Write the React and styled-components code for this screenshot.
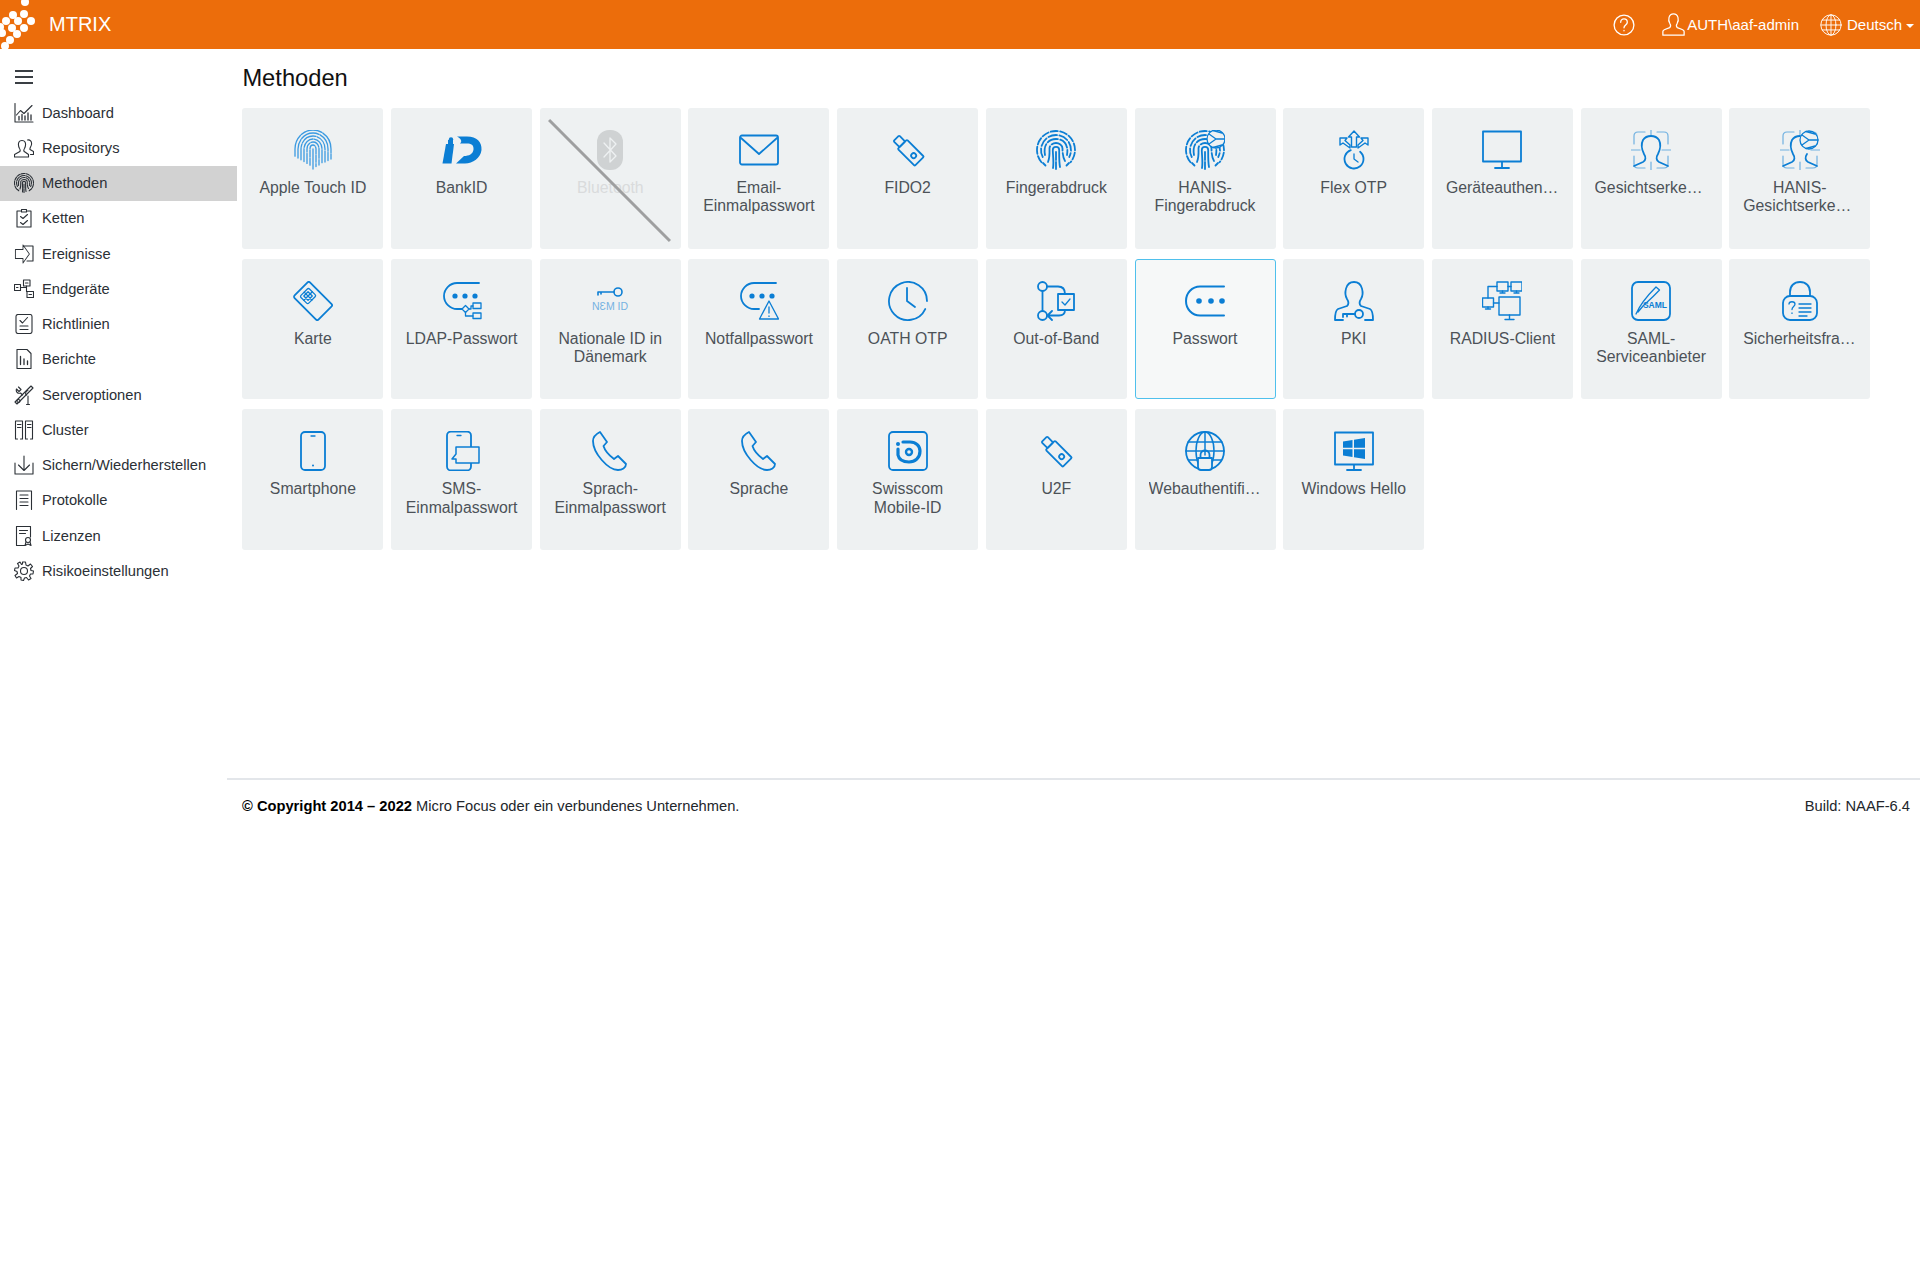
import React from 'react';
import styled, { createGlobalStyle } from 'styled-components';

const GlobalStyle = createGlobalStyle`
  html, body {
    margin: 0;
    padding: 0;
    background: #fff;
    font-family: "Liberation Sans", Arial, sans-serif;
  }
  * { box-sizing: border-box; }
`;

const Header = styled.header`
  display: flex;
  align-items: center;
  height: 49px;
  background: #ec6d0b;
  color: #fff;
  overflow: hidden;
`;

const Brand = styled.div`
  font-size: 20px;
  margin-left: 13px;
  flex: 1;
`;

const HeaderItem = styled.div`
  display: flex;
  align-items: center;
  gap: 1px;
  font-size: 15px;
  margin-left: ${props => props.$gap}px;
`;

const Caret = styled.span`
  width: 0;
  height: 0;
  margin: 2px 0 0 3px;
  border-left: 4px solid transparent;
  border-right: 4px solid transparent;
  border-top: 4px solid #fff;
`;

const Layout = styled.div`
  display: flex;
  align-items: flex-start;
`;

const Sidebar = styled.nav`
  flex: 0 0 227px;
  width: 227px;
`;

const Burger = styled.button`
  display: flex;
  flex-direction: column;
  justify-content: space-between;
  width: 18px;
  height: 14px;
  margin: 21px 0 11px 15px;
  padding: 0;
  border: 0;
  background: none;

  span {
    display: block;
    height: 2px;
    background: #3a3f44;
  }
`;

const MenuItem = styled.a`
  display: flex;
  align-items: center;
  gap: 8px;
  height: 35.25px;
  width: 237px;
  padding-left: 14px;
  font-size: 14.7px;
  color: #2b3036;
  background: ${props => (props.$active ? '#d2d2d2' : 'transparent')};
`;

const Main = styled.main`
  flex: 1;
  min-width: 0;
`;

const Content = styled.div`
  padding: 0 0 0 15.4px;
  height: 729px;
`;

const Title = styled.h1`
  margin: 0;
  padding-top: 14px;
  height: 59px;
  font-size: 23.7px;
  line-height: 30px;
  font-weight: 400;
  color: #111;
`;

const Grid = styled.div`
  display: grid;
  grid-template-columns: repeat(11, 141px);
  grid-auto-rows: 140.7px;
  column-gap: 7.7px;
  row-gap: 10px;
`;

const Card = styled.div`
  position: relative;
  padding: 21px 13px 0;
  background: ${props => (props.$selected ? '#f6f8f8' : '#eef1f2')};
  border: 1px solid ${props => (props.$selected ? '#4fc0ec' : 'transparent')};
  border-radius: 3px;
  color: ${props => (props.$disabled ? '#cfd2d3' : '#0b7ed4')};

  ${props => props.$disabled && `
    &::after {
      content: '';
      position: absolute;
      left: -17px;
      top: 70px;
      width: 171px;
      height: 3px;
      background: #9e9fa0;
      transform: rotate(45deg);
    }
  `}
`;

const Label = styled.div`
  margin-top: 9px;
  font-size: 15.8px;
  line-height: 18.3px;
  text-align: center;
  color: ${props => (props.$disabled ? '#d9dbdc' : '#4c5258')};
`;

const Line = styled.div`
  white-space: nowrap;
  overflow: hidden;
  text-overflow: ellipsis;
`;

const Footer = styled.footer`
  display: flex;
  justify-content: space-between;
  align-items: center;
  height: 54px;
  padding: 0 10px 0 15px;
  border-top: 2px solid #e3e6ea;
  font-size: 14.7px;
  color: #22262b;

  b { color: #000; }
`;

const IconSvg = styled.svg`
  display: block;
  flex: none;
  width: ${props => props.$size}px;
  height: ${props => props.$size}px;
  margin: ${props => (props.$center ? '0 auto' : '0')};
  fill: none;
  stroke: currentColor;
  stroke-width: ${props => props.$weight};
  stroke-linecap: round;
  stroke-linejoin: round;

  .solid { fill: currentColor; stroke: none; }
  .soft { stroke-width: 1.2; opacity: 0.55; }
  .thin { stroke-width: 1.3; }
  text {
    fill: currentColor;
    stroke: none;
    font-family: "Liberation Sans", Arial, sans-serif;
  }
`;

const CardIcon = ({ children }) => (
  <IconSvg viewBox="0 0 40 40" $size={40} $weight={1.8} $center>{children}</IconSvg>
);

const SideIcon = ({ children }) => (
  <IconSvg viewBox="0 0 40 40" $size={20} $weight={2.2}>{children}</IconSvg>
);

const point = (cx, cy, r, deg) => {
  const a = (deg - 90) * Math.PI / 180;
  return `${(cx + r * Math.cos(a)).toFixed(2)} ${(cy + r * Math.sin(a)).toFixed(2)}`;
};

const arc = (cx, cy, r, from, to) => {
  const large = to - from > 180 ? 1 : 0;
  return `M${point(cx, cy, r, from)} A${r} ${r} 0 ${large} 1 ${point(cx, cy, r, to)}`;
};

const Ball = ({ x = 29, y = 10 }) => (
  <g transform={`translate(${x} ${y})`}>
    <circle r="9" fill="#eef1f2" strokeWidth="1.3" />
    <path className="thin" d="M-7-5 L0 0 L-7 5 M0 0 H9 M-3-8.5 L6-6 M-3 8.5 L6 6" />
  </g>
);

const FingerprintLines = () => (
  <>
    <path strokeDasharray="7 2.4" d={arc(20, 20, 19, -130, 130)} />
    <path strokeDasharray="9 2.4" d={arc(20, 20, 15, -118, 118)} />
    <path strokeDasharray="11 2.4" d="M9 25 C7 14 13 9 20 9 C27 9 33 14 31 25" />
    <path d="M12 32 C14 27 13.5 21 13.5 18.5 C13.5 15 17 13 20 13 C23 13 26.5 15 26.5 18.5 C26.5 23 27 28 29 31" strokeDasharray="16 2.4" />
    <path d="M17 38 C18 32 16.8 25 16.8 20 C16.8 18 18 16.8 20 16.8 C22 16.8 23.2 18 23.2 20 C23.2 26 23 32 24 37" />
    <path d="M20 22 V39" strokeDasharray="8 2" />
    <path d="M7 33 L9.5 35.5 M33 33 L30.5 35.5" />
  </>
);

const Bubble = () => (
  <>
    <path d="M37 2 H15 C8 2 2 8 2 15 C2 22 8 28 15 28 H20" />
    <circle className="solid" cx="13" cy="15" r="2.6" />
    <circle className="solid" cx="23" cy="15" r="2.6" />
    <circle className="solid" cx="33" cy="15" r="2.6" />
  </>
);

const Usb = () => (
  <g transform="rotate(-45 20 20)">
    <rect x="13.5" y="12" width="13" height="24" rx="1" />
    <rect x="16" y="3.5" width="8" height="8.5" rx="1" />
    <circle cx="20" cy="28" r="2.5" />
  </g>
);

const FaceFrame = () => (
  <path className="soft" d="M3 14 V6 Q3 2 7 2 H14 M26 2 H33 Q37 2 37 6 V14 M3 26 V34 Q3 38 7 38 H14 M26 38 H33 Q37 38 37 34 V26 M20 0 V5 M20 32 V40 M0 20 H9 M31 20 H40" />
);

const Handset = () => (
  <path d="M10 1 L17 11 L13.5 15 C15 20 20 25 24 28 L28 25 L36 33 C36 37 32 39 28 39 C18 39 3 22 3 10 C3 6 6 3 10 1 Z" />
);

const methods = [
  { lines: ['Apple Touch ID'], icon: (
    <g className="thin" stroke="#3b9ae1">
      {[3, 6, 9, 12, 15, 18].map((r, i) => (
        <path key={r} strokeDasharray={`${7 + i * 3} 1.3`} d={`M${20 - r} ${19 + 18 - r * 0.6} V19 A${r} ${r + 1} 0 0 1 ${20 + r} 19 V${19 + 19 - r * 0.5}`} />
      ))}
      <path d="M20 19 V39" />
    </g>
  ) },
  { lines: ['BankID'], icon: (
    <g className="solid">
      <path d="M4 14 H12 L9.5 33.5 H0.5 Z" />
      <circle cx="9" cy="9.5" r="2.2" />
      <path d="M6 10 H11 V14 H6 Z" />
      <path d="M15 6.5 H25 C35 6.5 40 12 39.5 20 C38.5 28 31 33.5 23 33.5 H14 L22 26 C27 26 31 24 31.5 19.5 C32 15 29 13.5 25 13.5 H18 C20 12 20 9 15 6.5 Z" />
    </g>
  ) },
  { lines: ['Bluetooth'], disabled: true, icon: (
    <>
      <rect className="solid" x="7" y="0" width="26" height="40" rx="12" />
      <path stroke="#eef1f2" strokeWidth="1.3" d="M14 13 L26 26 L20 32 V8 L26 14 L14 27" />
    </>
  ) },
  { lines: ['Email-', 'Einmalpasswort'], icon: (
    <>
      <rect x="1" y="5.5" width="38" height="29" rx="2" />
      <path d="M2 8 L20 24 L38 8" />
    </>
  ) },
  { lines: ['FIDO2'], icon: <Usb /> },
  { lines: ['Fingerabdruck'], icon: <FingerprintLines /> },
  { lines: ['HANIS-', 'Fingerabdruck'], icon: (
    <>
      <FingerprintLines />
      <Ball x={31} y={9} />
    </>
  ) },
  { lines: ['Flex OTP'], icon: (
    <>
      <path d="M20 1 L25.5 7 H22.5 V17 H17.5 V7 H14.5 Z" strokeWidth="1.4" />
      <path d="M6 8 H13 L11 10.5 L16 15 V18 L9 13 L6 15 Z M34 8 H27 L29 10.5 L24 15 V18 L31 13 L34 15 Z" strokeWidth="1.4" />
      <path d={arc(20, 29, 9.5, 40, 340)} />
      <path className="thin" d="M20 24 V29 L24 32" />
    </>
  ) },
  { lines: ['Geräteauthentifizierung'], icon: (
    <>
      <rect x="1" y="1.5" width="38" height="30" />
      <path d="M20 32 V37 M13 38 H27" />
    </>
  ) },
  { lines: ['Gesichtserkennung'], icon: (
    <>
      <FaceFrame />
      <path d="M3 36 L12 32 C15 30.5 15 27 13 24 C11 20 10 14 12 10 C14 7 17 6 20 6 C23 6 26 7 28 10 C30 14 29 20 27 24 C25 27 25 30.5 28 32 L37 36" />
    </>
  ) },
  { lines: ['HANIS-', 'Gesichtserkennung'], icon: (
    <>
      <FaceFrame />
      <path d="M3 36 L12 32 C15 30.5 15 27 13 24 C11 20 10 14 12 10 C14 7 17 6 20 6 M27 24 C25 27 25 30.5 28 32 L37 36" />
      <Ball x={29} y={10} />
    </>
  ) },
  { lines: ['Karte'], icon: (
    <g transform="rotate(45 20 20)">
      <rect x="3" y="9" width="34" height="22" rx="2" />
      <g className="thin">
        <rect x="7.5" y="14" width="11" height="12" rx="1.5" />
        <path d="M13 14 V26 M7.5 20 H18.5 M10 17 H16 V23 H10 Z" />
      </g>
    </g>
  ) },
  { lines: ['LDAP-Passwort'], icon: (
    <>
      <Bubble />
      <g className="thin" strokeWidth="1.5">
        <path d="M20 28 L23.5 24.5 L27 28 L23.5 31.5 Z" />
        <rect x="31" y="22" width="8" height="5.5" />
        <rect x="31" y="32" width="8" height="5.5" />
        <path d="M27 28 H29 V25 H31 M23.5 31.5 V35 H31" />
      </g>
    </>
  ) },
  { lines: ['Nationale ID in', 'Dänemark'], icon: (
    <>
      <circle cx="28" cy="11" r="4" strokeWidth="1.6" />
      <path strokeWidth="1.6" d="M24 11 H8 V14 M11 11 V13" />
      <text x="20" y="29" fontSize="10.5" textAnchor="middle" opacity="0.55">NƐM ID</text>
    </>
  ) },
  { lines: ['Notfallpasswort'], icon: (
    <>
      <Bubble />
      <path className="thin" strokeWidth="1.4" fill="#eef1f2" d="M30 20 L39.5 38 H20.5 Z" />
      <path className="thin" d="M30 26 V32 M30 35 V35.4" />
    </>
  ) },
  { lines: ['OATH OTP'], icon: (
    <>
      <path d={arc(20, 20, 19, 115, 450)} />
      <path d="M19 7 V20 L27 26" />
    </>
  ) },
  { lines: ['Out-of-Band'], icon: (
    <>
      <circle cx="6.5" cy="5.5" r="4.5" />
      <circle cx="6.5" cy="34.5" r="4.5" />
      <path d="M6.5 10 V30 M11 5.5 H22 C27 5.5 29 8 29 13 M29 29 C29 32 27 34.5 23 34.5 H12 M16 30 L11.5 34.5 L16 39" />
      <rect x="22" y="13" width="16" height="16" />
      <path className="thin" d="M26 21 L29 24 L34 18" />
    </>
  ) },
  { lines: ['Passwort'], selected: true, icon: (
    <>
      <path d="M39 5.5 H15 C7 5.5 1 12 1 20 C1 28 7 34.5 15 34.5 H39" strokeWidth="2" />
      <circle className="solid" cx="14" cy="20" r="2.8" />
      <circle className="solid" cx="26" cy="20" r="2.8" />
      <circle className="solid" cx="37" cy="20" r="2.8" />
    </>
  ) },
  { lines: ['PKI'], icon: (
    <>
      <path d="M9 39 H1 C1 32 2 29 4 28 L13 25 C15 23 15 21 13 18 C10 13 11 1 20 1 C29 1 30 13 27 18 C25 21 25 23 27 25 L36 28 C38 29 39 32 39 39 H31" />
      <circle cx="25" cy="33" r="4" />
      <path d="M21 33 H9 V36 M13 33 V35.5" />
    </>
  ) },
  { lines: ['RADIUS-Client'], icon: (
    <g strokeWidth="1.4">
      <rect x="15" y="1" width="11" height="9" />
      <rect x="29" y="1" width="11" height="9" />
      <rect x="0.5" y="17" width="11" height="9" />
      <rect x="17" y="16" width="21" height="18" />
      <path d="M20.5 10 V12 M18 12 H23 M34.5 10 V12 M32 12 H37 M6 26 V28 M3.5 28 H8.5 M27.5 34 V38 M23 38.5 H32 M26 5.5 H29 M15 5.5 H6 V17 M11.5 22 H17" />
    </g>
  ) },
  { lines: ['SAML-', 'Serviceanbieter'], icon: (
    <>
      <rect x="1" y="1" width="38" height="38" rx="6" />
      <path className="thin" d="M5 33 C8 26 14 17 25 6 L28.5 9 C20 18 15 22 12 25 L7 31" />
      <text x="24" y="27" fontSize="8.5" fontWeight="700" textAnchor="middle">SAML</text>
    </>
  ) },
  { lines: ['Sicherheitsfragen'], icon: (
    <>
      <path d="M10 15 V11 C10 5 14 1 20 1 C26 1 30 5 30 11 V15" />
      <rect x="3" y="15" width="34" height="24" rx="7" />
      <path className="thin" d="M9 23 C9 20 15 20 15 23 C15 25.5 12 25.5 12 28.5 M12 32 V32.4 M19 23 H31 M19 27 H31 M19 31 H31 M19 35 H27" />
    </>
  ) },
  { lines: ['Smartphone'], icon: (
    <>
      <rect x="8" y="1" width="24" height="38" rx="4" />
      <path className="thin" d="M18 5 H22" />
      <circle className="solid" cx="20" cy="34.5" r="1" />
    </>
  ) },
  { lines: ['SMS-', 'Einmalpasswort'], icon: (
    <>
      <rect x="5" y="0.5" width="24" height="39" rx="4" />
      <path className="thin" d="M15 4.5 H19" />
      <path fill="#eef1f2" strokeWidth="1.5" d="M14 16 H37 V32 H14 V28 L10 28 L14 23 Z" />
    </>
  ) },
  { lines: ['Sprach-', 'Einmalpasswort'], icon: <Handset /> },
  { lines: ['Sprache'], icon: <Handset /> },
  { lines: ['Swisscom', 'Mobile-ID'], icon: (
    <>
      <rect x="1" y="1" width="38" height="38" rx="4" />
      <circle className="solid" cx="10" cy="13" r="2" />
      <path strokeWidth="3.2" d="M10 18 V24 C11 29 16 31 21 31 C27 31 32 27 32 20 C32 15 28 11 22 11 H15" />
      <circle cx="21" cy="21" r="3" strokeWidth="2.4" />
    </>
  ) },
  { lines: ['U2F'], icon: <Usb /> },
  { lines: ['Webauthentifizierung'], icon: (
    <>
      <circle cx="20" cy="20" r="19" />
      <ellipse cx="20" cy="20" rx="9" ry="19" strokeWidth="1.5" />
      <path strokeWidth="1.5" d="M20 1 V24 M3 11 H37 M1 20 H39 M3.5 29 H36.5" />
      <path fill="#eef1f2" strokeWidth="1.8" d="M13 27 H27 V36 C27 38 26 39 24 39 H16 C14 39 13 38 13 36 Z" />
      <path strokeWidth="1.8" d="M15.5 27 V24 C15.5 18 24.5 18 24.5 24 V27" />
    </>
  ) },
  { lines: ['Windows Hello'], icon: (
    <>
      <rect x="1" y="1.5" width="38" height="32" />
      <path d="M20 34 V38 M13 39 H27" />
      <path className="solid" d="M9 10.5 L18.5 9 V16.8 H9 Z M20 8.8 L31 7 V16.8 H20 Z M9 18.2 H18.5 V26 L9 24.5 Z M20 18.2 H31 V28 L20 26.2 Z" />
    </>
  ) },
];

const menu = [
  { name: 'Dashboard', icon: (
    <>
      <path d="M2 1 V38 H38" />
      <path d="M5 24 L13 15 L20 21 L36 5" />
      <path d="M10 34 V27 M16 34 V23 M22 34 V26 M28 34 V20 M34 34 V24" strokeWidth="2.6" />
    </>
  ) },
  { name: 'Repositorys', icon: (
    <>
      <path d="M1 38 V33 L10 28 C13 27 13 24 11 21 C9 17 8 12 10 8 C12 4 20 4 22 8 C24 12 23 17 21 21 C19 24 19 27 22 28 L29 33 V38 Z" />
      <path d="M27 4 C32 3 36 7 35 13 C34 18 31 20 32 23 L39 27 V33 H33" />
    </>
  ) },
  { name: 'Methoden', active: true, icon: <FingerprintLines /> },
  { name: 'Ketten', icon: (
    <>
      <path d="M13 6 H6 V38 H34 V6 H27" />
      <path d="M15 3 H25 V8 H15 Z" />
      <path d="M13 17 L18 21 L27 13 M13 29 L18 33 L27 25" />
    </>
  ) },
  { name: 'Ereignisse', icon: (
    <>
      <path d="M20 2 V11 H1 V29 H20 V38 L36 20 Z" transform="translate(2 0) scale(0.8 1)" />
      <path d="M20 4 H38 V34 H26" />
    </>
  ) },
  { name: 'Endgeräte', icon: (
    <>
      <rect x="1" y="11" width="12" height="12" />
      <rect x="19" y="2" width="13" height="12" />
      <rect x="26" y="25" width="13" height="12" />
      <path d="M13 17 H24 M25 14 V25 M5 17 H8 M23 8 H28 M30 31 H35" />
    </>
  ) },
  { name: 'Richtlinien', icon: (
    <>
      <rect x="4" y="1" width="32" height="38" rx="4" />
      <path d="M12 13 L17 18 L27 7 M12 24 H28 M12 31 H28" />
    </>
  ) },
  { name: 'Berichte', icon: (
    <>
      <path d="M6 1 H26 L34 9 V39 H6 Z" />
      <path d="M13 15 V31 M20 20 V31 M27 24 V31" strokeWidth="2.6" />
    </>
  ) },
  { name: 'Serveroptionen', icon: (
    <>
      <path d="M2 34 L34 2 L38 6 L6 38 Z" />
      <path d="M9 4 L14 9 L10 13 L5 8 C3 14 8 18 13 16 L17 20 M28 39 V22 M25 39 H31 M25 20 C22 18 23 12 28 11" />
      <circle cx="9" cy="32" r="3" />
    </>
  ) },
  { name: 'Cluster', icon: (
    <>
      <path d="M3 38 V2 H17 V38 M23 38 V2 H37 V38 M3 38 H7 M13 38 H17 M23 38 H27 M33 38 H37" />
      <path d="M7 9 H14 M7 15 H14 M27 9 H34 M27 15 H34" />
    </>
  ) },
  { name: 'Sichern/Wiederherstellen', icon: (
    <>
      <path d="M2 16 V38 H38 V16" />
      <path d="M20 2 V30 M9 20 L20 31 L31 20" />
    </>
  ) },
  { name: 'Protokolle', icon: (
    <>
      <path d="M5 39 V2 H35 V39" />
      <path d="M12 10 H28 M12 17 H28 M12 24 H28 M12 31 H28" />
    </>
  ) },
  { name: 'Lizenzen', icon: (
    <>
      <path d="M22 39 H5 V1 H33 V22" />
      <path d="M11 9 H27 M11 15 H23" />
      <circle cx="28" cy="28" r="5" />
      <path d="M24 32 L22 39 L28 36 L34 39 L32 32" />
    </>
  ) },
  { name: 'Risikoeinstellungen', icon: (
    <>
      <circle cx="20" cy="20" r="7" />
      <path d="M17 2 H23 L24 8 L28 10 L33 6 L37 11 L33 15 L34 19 L39 20 L38 26 L33 26 L31 30 L34 35 L29 38 L25 33 L21 34 L19 39 L14 38 L14 33 L10 31 L5 34 L2 29 L7 25 L6 21 L1 19 L2 14 L8 14 L10 10 L7 5 L12 2 L15 7 L17 6 Z" />
    </>
  ) },
];

const logoDots = [
  [25, 2], [13, 15], [24, 14], [31, 21], [18, 21], [6, 21], [12, 28], [24, 28],
  [2, 33], [17, 34], [10, 40], [5, 46], [0, 27],
];

const App = () => (
  <>
    <GlobalStyle />
    <Header>
      <svg width="36" height="49" viewBox="0 0 36 49">
        {logoDots.map(([x, y]) => (
          <circle key={`${x}-${y}`} cx={x} cy={y} r="4" fill="#fff" />
        ))}
      </svg>
      <Brand>MTRIX</Brand>
      <HeaderItem>
        <IconSvg viewBox="0 0 40 40" $size={22} $weight={2.4}>
          <circle cx="20" cy="20" r="18" />
          <path d="M14 15 C14 7 26 7 26 15 C26 20 20 20 20 25 M20 30 V30.5" />
        </IconSvg>
      </HeaderItem>
      <HeaderItem $gap={26}>
        <IconSvg viewBox="0 0 40 40" $size={25} $weight={2}>
          <path d="M3 37 V31 C3 29 5 28 14 25 C16 23 16 21 14 18 C11 13 12 3 20 3 C28 3 29 13 26 18 C24 21 24 23 26 25 C35 28 37 29 37 31 V37 Z" />
        </IconSvg>
        AUTH\aaf-admin
      </HeaderItem>
      <HeaderItem $gap={21}>
        <IconSvg viewBox="0 0 40 40" $size={22} $weight={1.7}>
          <circle cx="20" cy="20" r="18.5" />
          <ellipse cx="20" cy="20" rx="9" ry="18.5" />
          <path d="M20 2 V38 M4 11 H36 M2 20 H38 M4 29 H36" />
        </IconSvg>
        <span style={{ marginLeft: 4 }}>Deutsch</span>
        <Caret />
      </HeaderItem>
      <span style={{ width: 6 }} />
    </Header>
    <Layout>
      <Sidebar>
        <Burger aria-label="Menu">
          <span />
          <span />
          <span />
        </Burger>
        {menu.map(item => (
          <MenuItem key={item.name} $active={item.active}>
            <SideIcon>{item.icon}</SideIcon>
            {item.name}
          </MenuItem>
        ))}
      </Sidebar>
      <Main>
        <Content>
          <Title>Methoden</Title>
          <Grid>
            {methods.map(method => (
              <Card key={method.lines.join('')} $selected={method.selected} $disabled={method.disabled}>
                <CardIcon>{method.icon}</CardIcon>
                <Label $disabled={method.disabled}>
                  {method.lines.map(line => <Line key={line}>{line}</Line>)}
                </Label>
              </Card>
            ))}
          </Grid>
        </Content>
        <Footer>
          <span><b>© Copyright 2014 – 2022</b> Micro Focus oder ein verbundenes Unternehmen.</span>
          <span>Build: NAAF-6.4</span>
        </Footer>
      </Main>
    </Layout>
  </>
);

export default App;
